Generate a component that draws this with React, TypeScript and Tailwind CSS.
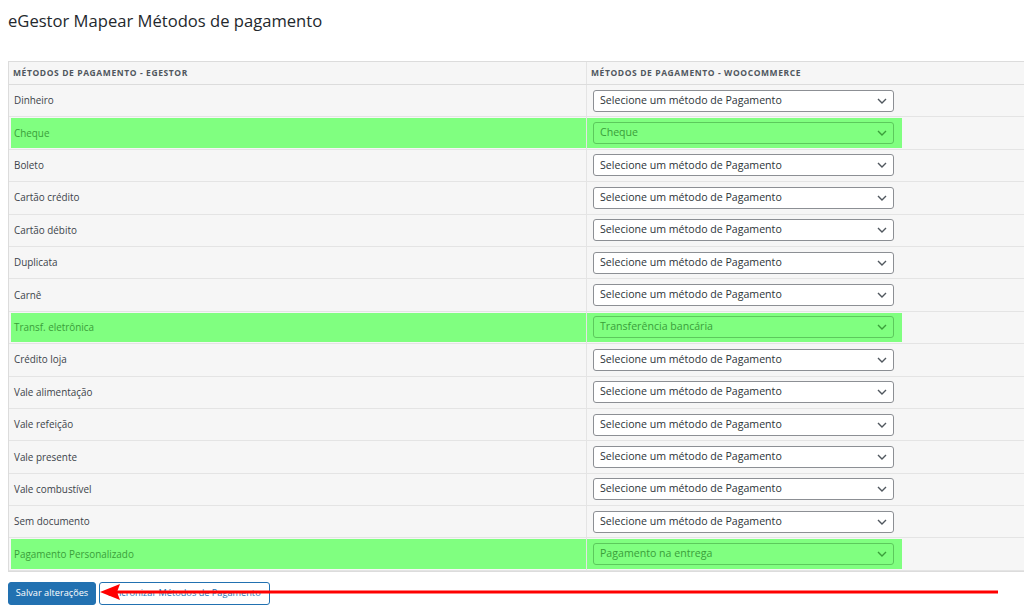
import React from 'react'

type Row = { label: string; value?: string }

const rows: Row[] = [
  { label: 'Dinheiro' },
  { label: 'Cheque', value: 'Cheque' },
  { label: 'Boleto' },
  { label: 'Cartão crédito' },
  { label: 'Cartão débito' },
  { label: 'Duplicata' },
  { label: 'Carnê' },
  { label: 'Transf. eletrônica', value: 'Transferência bancária' },
  { label: 'Crédito loja' },
  { label: 'Vale alimentação' },
  { label: 'Vale refeição' },
  { label: 'Vale presente' },
  { label: 'Vale combustível' },
  { label: 'Sem documento' },
  { label: 'Pagamento Personalizado', value: 'Pagamento na entrega' },
]

function Chevron({ color }: { color: string }) {
  return (
    <svg width="10" height="6" viewBox="0 0 10 6" fill="none">
      <path d="M1 1l4 4 4-4" stroke={color} strokeWidth="1.4" />
    </svg>
  )
}

function MappingRow({ row }: { row: Row }) {
  const on = !!row.value
  return (
    <div className="flex h-[32.4px] border-b border-[#e4e4e4]">
      <div className="w-[578px] shrink-0 border-r border-[#e4e4e4] flex items-stretch pl-[2px] py-[1px]">
        <div className={`flex-1 flex items-center pl-[3px] ${on ? 'bg-[#80ff80] text-[#3a9e3a]' : 'text-[#3c434a]'}`}>
          {row.label}
        </div>
      </div>
      <div className="flex-1 flex items-stretch py-[1px]">
        <div className={`w-[315px] flex items-center pl-[6px] ${on ? 'bg-[#80ff80]' : ''}`}>
          <div
            className={`w-[301px] h-[22px] rounded-[3px] border flex items-center justify-between pl-[6px] pr-[6px] text-[10.6px] ${
              on ? 'bg-[#80ff80] border-[#5cc95c] text-[#3a9e3a]' : 'bg-white border-[#8c8f94] text-[#2c3338]'
            }`}
          >
            <span>{row.value ?? 'Selecione um método de Pagamento'}</span>
            <Chevron color={on ? '#3a9e3a' : '#50575e'} />
          </div>
        </div>
      </div>
    </div>
  )
}

export default function App() {
  return (
    <div className="w-[1024px] h-[615px] overflow-hidden bg-white relative font-['Open_Sans',sans-serif]">
      <h1 className="pl-[8px] pt-[8px] text-[16.6px] text-[#23282d] leading-[26px]">
        eGestor Mapear Métodos de pagamento
      </h1>

      {/* Mapping table */}
      <div className="ml-[8px] mt-[27px] w-[1030px] bg-[#f6f6f6] border border-[#dcdcdc] text-[9.9px]">
        <div className="flex h-[23px] border-b border-[#dcdcdc] text-[8.5px] font-bold tracking-[0.07em] text-[#50575e]">
          <div className="w-[578px] shrink-0 border-r border-[#e4e4e4] flex items-center pl-[4px]">
            MÉTODOS DE PAGAMENTO - EGESTOR
          </div>
          <div className="flex-1 flex items-center pl-[4px]">MÉTODOS DE PAGAMENTO - WOOCOMMERCE</div>
        </div>
        {rows.map(r => (
          <MappingRow key={r.label} row={r} />
        ))}
      </div>

      {/* Buttons */}
      <div className="flex gap-[3px] pl-[8px] mt-[10px] text-[9.2px] whitespace-nowrap">
        <button className="h-[23px] w-[88px] rounded-[3px] bg-[#2271b1] border border-[#2271b1] text-white">
          Salvar alterações
        </button>
        <button className="h-[23px] w-[171px] rounded-[3px] bg-white border border-[#2271b1] text-[#2271b1]">
          Sincronizar Métodos de Pagamento
        </button>
      </div>

      {/* Red arrow annotation */}
      <svg className="absolute left-0 top-0" width="1024" height="615" viewBox="0 0 1024 615">
        <line x1="112" y1="592" x2="998" y2="592" stroke="#ff0000" strokeWidth="3" />
        <path d="M100 592 L120 584 L117 592 L120 600 Z" fill="#ff0000" />
      </svg>
    </div>
  )
}
